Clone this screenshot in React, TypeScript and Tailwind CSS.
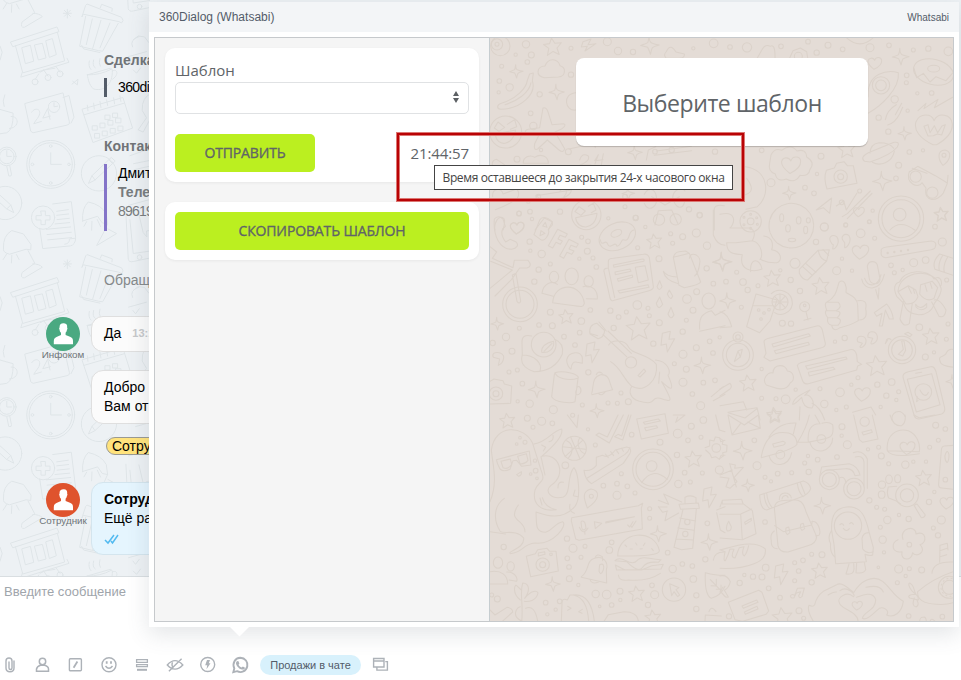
import React from "react";

type Pt = [number, number];
type Dot = [number, number, number];

/* Small repeated ornaments used by the wallpaper */
function Dots({ items }: { items: Dot[] }) {
  return <>{items.map(([x, y, r], i) => <circle key={i} cx={x} cy={y} r={r} />)}</>;
}
function Stars({ items }: { items: Dot[] }) {
  return (
    <>
      {items.map(([x, y, r], i) => (
        <path key={i} transform={`translate(${x} ${y}) scale(${r / 20})`} strokeWidth={64 / r}
          d="M-3-20 5-8 20-9 10 3 15 18 1 11-12 20-9 4-21-5-7-7Z" />
      ))}
    </>
  );
}
function Sparkles({ items }: { items: Dot[] }) {
  return (
    <>
      {items.map(([x, y, r], i) => (
        <path key={i} transform={`translate(${x} ${y}) scale(${r / 20})`} strokeWidth={64 / r}
          d="M-2-20Q-2-5 5-4 10-2 20 0 8 3 5 6 3 10 1 20-3 8-5 5-10 3-20 1-8-3-5-5-3-9-2-20Z" />
      ))}
    </>
  );
}
function Hearts({ items }: { items: Dot[] }) {
  return (
    <>
      {items.map(([x, y, r], i) => (
        <path key={i} transform={`translate(${x} ${y}) scale(${r / 20})`} strokeWidth={64 / r}
          d="M-3 19C-12 12-22 4-21-6-19-16-6-18-1-8 3-20 19-18 20-8 21 4 7 14-3 19Z" />
      ))}
    </>
  );
}
function Bolts({ items }: { items: Pt[] }) {
  return (
    <>
      {items.map(([x, y], i) => (
        <path key={i} transform={`translate(${x} ${y})`} d="M-16-26 8-32 4-8 21-10-1 30-4 6-20 10Z" />
      ))}
    </>
  );
}

function Wallpaper() {
  return (
    <svg className="absolute inset-0 h-full w-full" viewBox="490 38 463 583" fill="none" stroke="#dbd2ca" strokeWidth="3.2" strokeLinejoin="round" strokeLinecap="round" aria-hidden="true">
      <g transform="translate(485 30) scale(.33333)">
        <circle cx="46" cy="48" r="29" /><circle cx="36" cy="43" r="17" /><circle cx="36" cy="43" r="6" />
        <Dots items={[[123, 43, 11], [92, 74, 5], [139, 75, 9], [127, 96, 7], [50, 109, 6], [43, 153, 7], [41, 187, 5], [74, 172, 11], [164, 193, 8], [258, 55, 6], [258, 134, 8], [367, 35, 12], [399, 63, 11], [444, 66, 8], [137, 250, 7], [145, 288, 11], [96, 388, 9], [168, 360, 5], [250, 365, 9], [686, 40, 13], [625, 55, 5], [225, 545, 8], [130, 515, 5], [160, 500, 7], [102, 550, 7], [135, 545, 7], [420, 530, 6], [452, 563, 7], [612, 538, 8], [644, 555, 8], [420, 500, 7], [560, 360, 8], [510, 365, 7], [690, 365, 8]]} />
        <Stars items={[[203, 50, 26]]} />
        <Sparkles items={[[94, 124, 20], [215, 186, 23], [495, 45, 28], [450, 367, 22], [430, 490, 19]]} />
        <path d="M178 143C150 138 155 108 180 108 190 82 218 85 225 107 244 112 243 139 220 141Z" />
        <path d="M134 132 145 129 142 153C155 190 110 237 47 238 34 236 35 224 49 220 96 205 124 174 127 151ZM138 158C132 190 96 213 60 224" />
        <path d="M294 35 318 27 309 44 333 41 300 63 307 49 289 51Z" />
        <path d="M174 234Q184 230 189 246L201 284 236 281Q246 285 231 296L210 306 239 356Q235 371 222 360L187 330 158 357Q145 363 149 341L162 315 122 309Q118 300 130 298L164 293Z" />
        <circle cx="62" cy="306" r="48" /><path d="M31 312C34 353 85 349 92 300ZM28 294 39 276 59 292 42 304ZM67 283 89 269 95 290 76 298" />
        <path d="M272 240C240 245 230 190 274 188" />
        <path d="M115 400C113 382 135 372 149 382 166 370 190 378 190 400ZM22 405Q20 391 35 388L58 404M252 357 320 342Q330 342 331 353M284 390Q291 366 310 378 316 394 285 405H318M330 402 340 374 329 392 354 389M349 405 355 371" />
        <path d="M510 345 650 335M514 363 619 349M508 376 620 362M484 390 490 360 512 350M630 340 682 330" />
        <path d="M23 500C20 475 50 470 54 492L95 477Q106 488 97 505 71 525 31 539M153 497 260 480Q250 514 170 511ZM225 483C240 462 252 485 237 500" />
        <circle cx="304" cy="555" r="44" /><path d="M272 563C275 600 330 605 336 550ZM270 545 282 530 301 543 288 556ZM310 529 325 520 333 540 319 548" />
        <path d="M478 493C490 470 510 475 514 500 520 530 490 550 478 520M600 483C590 467 565 480 563 502 570 535 595 545 600 510M500 500 540 525 583 500M510 585 520 542 560 540 578 580" /><circle cx="522" cy="569" r="17" /><circle cx="572" cy="568" r="17" />
        <path d="M688 600V535Q693 522 718 527M150 600 178 564 202 575 190 600M30 600C26 580 40 552 57 566Q62 574 54 600M550 55Q560 45 573 66L598 72Q600 84 583 85H544Q534 76 543 66Z" />
        <Hearts items={[[97, 593, 20]]} />
      </g>
      <g transform="translate(720 0) scale(.33333)">
        <Dots items={[[30, 141, 7], [81, 142, 14], [183, 139, 7], [264, 125, 7], [290, 158, 8], [324, 136, 9], [368, 148, 7], [450, 143, 12], [507, 136, 7], [580, 150, 6], [625, 146, 8], [685, 154, 13], [559, 248, 6], [560, 226, 7], [524, 298, 11], [592, 280, 5], [635, 279, 7], [476, 353, 8], [505, 395, 8], [563, 332, 5], [568, 456, 7], [609, 451, 5], [303, 469, 9], [291, 522, 5], [153, 548, 12], [255, 563, 7], [282, 580, 7], [365, 607, 7], [419, 573, 6], [458, 632, 5], [536, 496, 9], [528, 535, 7], [448, 665, 6], [313, 681, 12], [125, 451, 7], [377, 674, 6]]} />
        <Sparkles items={[[542, 170, 25], [554, 400, 20], [208, 579, 20], [487, 543, 29]]} />
        <Stars items={[[664, 643, 21], [380, 448, 25]]} />
        <Hearts items={[[465, 189, 20], [214, 494, 28]]} />
        <path d="M639 434C600 416 580 390 588 365 600 338 635 340 642 362 655 335 694 342 697 372 698 398 675 420 650 434Z" />
        <path d="M112 174 125 151Q136 130 151 139 166 130 165 174M209 174 219 152 241 144 260 155 263 174" /><circle cx="235" cy="169" r="12" />
        <path d="M379 113Q420 150 460 113" />
        <ellipse cx="641" cy="216" rx="61" ry="38" transform="rotate(14 641 214)" /><ellipse cx="641" cy="206" rx="18" ry="10" /><path d="M582 205 590 233 610 220 630 246 648 230 678 242 697 220" />
        <path d="M444 290C441 215 505 210 535 218 541 267 480 320 444 340" /><circle cx="483" cy="256" r="26" /><circle cx="483" cy="256" r="16" />
        <path d="M496 359Q501 330 529 314M503 375Q525 370 540 340L548 322M526 344 545 310M594 332 618 310 612 326 654 298 643 323 698 292M612 379 624 374 630 398 643 377 653 398 666 378 676 374 665 405 652 402 640 407 624 408Z" />
        <path d="M434 484Q418 472 445 458L522 427Q542 424 532 441 513 465 450 486ZM450 460Q450 432 477 428 510 428 521 445M457 487C480 500 516 488 523 454" />
        <path d="M153 465Q164 442 185 451 213 430 231 453 258 445 260 471 287 487 270 508 267 530 240 526 225 552 199 537 171 548 166 522 143 514 149 490Z" />
        <path d="M319 511 343 504 350 490 372 485 382 497 400 497 411 550 321 567Q310 535 319 511Z" /><circle cx="362" cy="530" r="20" /><circle cx="362" cy="530" r="9" />
        <path d="M568 516 593 499 646 527 682 549 684 526M568 514C555 550 595 568 606 548L618 564C610 609 654 605 670 579L682 550M577 505 621 520" /><circle cx="587" cy="530" r="17" /><circle cx="637" cy="578" r="17" />
        <path d="M669 496C654 480 650 451 675 450 698 454 691 481 669 496Z" /><circle cx="672" cy="466" r="6" />
        <path d="M289 630 335 594 329 640 310 623ZM349 618 371 603 379 630 411 579M367 650 382 641 451 573M382 656 456 580" />
        <circle cx="543" cy="656" r="68" /><circle cx="543" cy="656" r="57" /><circle cx="539" cy="644" r="19" /><path d="M510 690Q540 657 584 690" />
        <path d="M76 500C150 510 150 590 112 620L78 628M80 535Q110 575 76 584" />
      </g>
      <g transform="translate(485 210) scale(.33333)">
        <path d="M28 27C24 80 45 118 80 118 95 115 104 105 92 95L75 88 62 96Q45 74 53 57L61 49 54 27Q40 13 28 27ZM164 30C174 13 205 29 202 45L190 58C196 73 177 98 166 88L147 74ZM181 37 173 48 186 52ZM168 62 165 77 180 70ZM218 58 247 72 241 82 225 76 219 87 232 93 226 103 213 97 203 114 190 107ZM252 88 280 102 274 112 258 106 252 117 267 123 260 133 246 127 236 145 224 138Z" />
        <ellipse cx="397" cy="79" rx="57" ry="40" transform="rotate(-24 397 79)" /><ellipse cx="394" cy="70" rx="17" ry="10" transform="rotate(-24 394 70)" /><path d="M346 89C350 115 362 83 369 104 378 119 391 90 396 109 411 107 406 82 421 91 437 90 428 62 447 60" />
        <Hearts items={[[97, 53, 20]]} />
        <Dots items={[[102, 11, 7], [141, 27, 5], [134, 95, 8], [136, 122, 5], [170, 132, 11], [196, 162, 6], [161, 179, 8], [148, 215, 8], [290, 82, 6], [309, 94, 7], [307, 124, 9], [283, 146, 5], [324, 144, 6], [334, 171, 7], [370, 25, 5], [452, 24, 8], [481, 51, 5], [458, 113, 6], [557, 71, 6], [593, 80, 9], [634, 69, 12], [563, 100, 6], [522, 146, 9], [666, 107, 11], [644, 16, 8], [665, 175, 8], [685, 221, 7], [635, 245, 9], [606, 267, 13], [624, 301, 9], [604, 331, 6], [457, 285, 13], [489, 295, 6], [493, 317, 6], [523, 338, 9], [376, 302, 8], [401, 321, 7], [424, 306, 6], [386, 354, 8], [316, 300, 7], [196, 307, 9], [289, 333, 10], [202, 347, 9], [162, 345, 7], [103, 355, 6], [63, 381, 11], [81, 424, 9], [23, 399, 8], [237, 380, 7], [284, 368, 7], [270, 405, 7], [310, 487, 8], [72, 486, 6], [97, 480, 6], [112, 521, 7], [134, 581, 11], [205, 599, 12], [98, 574, 5], [292, 585, 6], [369, 579, 6], [397, 580, 6], [430, 575, 9], [408, 549, 6], [505, 401, 8], [593, 365, 8], [594, 433, 12], [604, 478, 9], [568, 461, 6], [594, 517, 12], [655, 518, 7], [690, 511, 7], [622, 552, 7], [647, 587, 12], [634, 413, 9], [674, 394, 7], [684, 429, 7], [704, 382, 5]]} />
        <Stars items={[[508, 94, 22], [243, 320, 21], [460, 355, 35]]} />
        <Sparkles items={[[37, 341, 19], [155, 538, 25], [336, 602, 21], [652, 466, 25], [711, 155, 27]]} />
        <path d="M15 110 35 126 22 145 84 173 88 151 129 151Q144 168 126 174L104 174 80 208 30 258M17 154 82 180 15 235M82 195 93 190 107 273Q104 285 96 274Z" /><circle cx="105" cy="283" r="52" /><circle cx="105" cy="283" r="42" />
        <ellipse cx="207" cy="201" rx="14" ry="17" /><ellipse cx="260" cy="199" rx="20" ry="25" /><ellipse cx="311" cy="214" rx="14" ry="17" /><path d="M203 278C207 215 290 216 298 280 294 296 290 289 203 278ZM171 250C175 220 201 211 217 223M171 250 205 259M294 230C321 222 339 242 337 267L304 266" />
        <path d="M370 154Q370 145 385 145L475 133Q488 130 493 143L505 230Q506 238 492 242L388 271Q378 275 375 264L357 184Q355 175 370 174ZM370 174 389 263M385 165 473 147Q480 148 476 154L387 172ZM390 186 435 177 438 184 391 194ZM397 206 442 195 443 202 400 214ZM399 242 489 224 492 232 404 249ZM451 172 480 167 490 210 460 218Z" />
        <path d="M565 142Q570 126 582 125L602 123 613 130 647 216Q643 225 598 233L582 226 565 142ZM565 142 613 130M613 145C616 121 650 135 644 160Q641 188 629 198M577 201Q544 200 535 184 540 211 580 221M524 212 516 230Q522 247 531 230ZM553 240 547 252Q557 275 563 258ZM524 261 514 280Q520 304 533 283ZM558 292 549 312Q557 333 567 315Z" />
        <circle cx="176" cy="404" r="37" /><path d="M140 378Q109 370 111 400L112 435Q101 470 148 485 210 484 232 432 238 400 209 388M111 435C150 435 173 461 165 483M170 427C168 405 188 398 206 394 209 417 190 430 170 427ZM177 424 201 400M245 450C250 424 291 420 292 445V460L277 457Q260 451 258 478 246 468 245 450Z" />
        <path d="M315 372Q310 344 336 340L359 362Q357 383 339 386ZM354 374 425 440M369 363 439 430M342 336 364 363M318 371 338 377M371 405C380 388 420 389 430 410 440 435 489 430 514 463 520 510 480 550 440 529 410 500 410 476 377 455 365 430 371 405Z" /><circle cx="438" cy="457" r="17" /><path d="M459 497 477 477 482 484 465 501ZM511 450C551 453 559 490 549 496 566 535 567 550 530 515 560 570 569 580 525 565 493 558 520 590 461 573 436 565 430 545 440 530M524 486 521 520" />
        <Bolts items={[[322, 428], [548, 396]]} />
        <path d="M210 488 208 494 200 560C212 580 260 580 270 575L279 505M210 488C235 480 287 493 279 505 250 514 215 505 210 488M275 534C282 521 292 539 286 549 276 560 269 551 274 541M320 550C327 530 319 501 347 494 378 493 371 520 383 539L320 554M334 494Q338 481 352 490M341 551Q350 560 361 545" />
        <path d="M15 514 27 507 54 512 58 522 80 528 77 580 15 582" /><circle cx="33" cy="551" r="20" /><circle cx="33" cy="551" r="9" /><path d="M25 442C15 420 60 425 56 444Q54 460 40 466L44 447Z" />
        <ellipse cx="671" cy="273" rx="20" ry="24" /><path d="M644 358C641 320 654 309 679 302L691 316 720 301M644 364 720 347M679 560 715 530M685 572 720 553M685 0V75Q696 105 720 106" />
      </g>
      <g transform="translate(720 210) scale(.33333)">
        <circle cx="214" cy="47" r="67" strokeDasharray="35 3" /><circle cx="92" cy="34" r="32" /><Dots items={[[92, 34, 10], [92, 13, 3], [110, 23, 3], [112, 43, 3], [92, 55, 3], [72, 44, 3], [72, 22, 3]]} />
        <g><ellipse cx="185" cy="23" rx="6" ry="12" /><ellipse cx="236" cy="31" rx="7" ry="11" /><ellipse cx="204" cy="55" rx="7" ry="11" /><ellipse cx="257" cy="60" rx="6" ry="11" /><ellipse cx="216" cy="90" rx="11" ry="5" /><ellipse cx="265" cy="31" rx="6" ry="8" /></g>
        <path d="M0 13C50 0 46 40 30 54H90Q112 65 97 92L48 98 20 98C20 130 40 132 67 134 55 180 97 189 126 177 121 145 88 140 92 185M97 92C127 99 129 140 120 148M131 78C165 82 157 113 155 119 187 124 187 155 170 158 140 160 128 150 120 148" />
        <Dots items={[[313, 51, 12], [377, 46, 6], [288, 96, 8], [225, 160, 15], [366, 146, 5], [350, 182, 12], [396, 182, 5], [422, 70, 13], [464, 85, 6], [448, 35, 5], [513, 166, 7], [523, 188, 6], [548, 180, 5], [581, 158, 12], [617, 150, 10], [645, 50, 7], [667, 96, 12], [680, 210, 6], [18, 215, 7], [50, 187, 6], [69, 216, 10], [83, 240, 8], [114, 227, 6], [181, 181, 5], [212, 210, 8], [240, 243, 8], [64, 292, 6], [187, 340, 9], [213, 341, 8], [345, 395, 5], [374, 384, 8], [598, 352, 10], [684, 342, 6], [679, 388, 6], [616, 441, 9], [642, 427, 5], [125, 477, 5], [227, 539, 5], [197, 568, 13], [125, 565, 6], [168, 566, 6], [300, 536, 6], [360, 547, 13], [313, 582, 11], [349, 600, 5], [379, 591, 6], [394, 524, 5], [414, 503, 6], [472, 524, 8], [515, 516, 10], [499, 557, 8], [536, 545, 6], [529, 570, 5], [482, 591, 5]]} />
        <Stars items={[[157, 205, 24], [302, 228, 25], [664, 13, 19], [633, 379, 24], [84, 519, 24], [470, 467, 30], [163, 614, 22]]} />
        <Sparkles items={[[7, 155, 29], [23, 272, 24], [698, 514, 20]]} />
        <Hearts items={[[422, 125, 24], [428, 552, 23], [417, 5, 16]]} />
        <path d="M238 178 294 121 328 119 320 153 263 210Q248 211 238 190ZM248 170 277 196M257 160 288 187M295 121Q299 148 320 153M309 119 326 136M336 102C320 80 337 72 350 80 363 98 345 119 338 117L340 104ZM374 98C356 80 375 66 387 77 397 95 380 114 374 113ZM484 124Q480 114 500 111L634 93Q653 95 645 113 642 118 625 121L497 143Q480 141 484 124ZM700 145 659 132Q635 155 645 178L700 196M669 135Q653 159 658 182M683 141Q668 166 673 187" />
        <Dots items={[[503, 129, 2], [523, 126, 2], [543, 123, 2], [564, 120, 2]]} />
        <path d="M442 169C445 150 471 150 473 170L480 207C481 226 452 226 448 207ZM425 207C431 244 481 246 493 193M434 205C445 234 474 231 483 194M467 239 475 267 477 234" />
        <path d="M320 277C350 260 350 238 357 217 375 202 381 234 378 247 387 255 412 260 413 286L415 332Q390 347 360 353 340 368 335 346 320 343 323 323 311 307 320 300 312 280 320 277H355Q369 290 349 302H321M323 323H352Q369 305 350 303M335 346H354Q370 329 352 324M413 272Q444 267 437 296 444 329 419 330" />
        <path d="M534 243C540 180 645 170 661 230 670 240 653 270 643 280 631 328 560 323 552 281L530 259C520 237 522 220 539 216 553 178 625 175 642 207 662 193 669 217 661 230M534 245 565 227 587 240 594 260Q585 284 558 282ZM599 252 602 224 637 214 653 233 642 265Q620 279 599 252M550 274 540 327Q550 354 568 341L577 279M643 270Q659 264 678 300 675 326 657 319L635 276M587 283Q600 303 620 281V292Q602 307 588 291ZM565 230 574 250M579 234 584 250M615 224 621 244M631 219 636 235" />
        <path d="M108 252 171 270 150 333 119 368 80 350ZM98 287H161M154 251C175 231 219 243 217 283 212 311 180 320 164 308" /><circle cx="180" cy="276" r="24" /><path d="M158 276H203M180 252V298M164 260 196 293M195 259 164 293" /><Dots items={[[116, 300, 4], [147, 299, 4], [132, 309, 4], [123, 327, 4], [254, 290, 15], [254, 286, 4]]} />
        <path d="M258 305 264 330M252 331 273 325M463 308 500 282Q516 300 520 327H508L496 300 487 348H478L486 310 470 319Z" />
        <path d="M0 305Q25 310 35 350L0 353" />
        <circle cx="54" cy="435" r="46" /><circle cx="54" cy="435" r="35" /><circle cx="54" cy="381" r="15" /><Dots items={[[54, 381, 7]]} /><path d="M43 455 54 423 67 418 61 441ZM54 423 61 441" />
        <path d="M146 385 290 348Q302 345 307 360L316 400Q317 411 302 414L150 453 132 442 138 430 132 395Q133 388 146 385ZM156 402 266 371 271 378 160 411ZM163 422 265 397 268 404 168 431ZM242 458 390 419Q405 416 410 435L412 455 425 463 413 468 410 480 265 521Q251 524 247 510L232 467Q233 461 242 458ZM257 468 378 441 381 447 262 478ZM265 487 340 472 345 478 268 498Z" />
        <path d="M413 395C405 374 435 374 438 390 440 408 420 417 420 410L427 400ZM444 382C440 360 468 360 472 379 474 400 450 407 453 398L458 385ZM503 390 496 401 500 389Q507 383 513 389M554 371 564 367 576 374 570 380Z" /><circle cx="546" cy="420" r="41" /><circle cx="546" cy="420" r="31" /><path d="M545 393 550 418 535 433 548 438 557 421 552 393ZM139 525C124 508 144 484 159 489 160 460 198 461 202 483 225 485 224 513 211 518 198 547 165 534 157 531ZM661 454C650 435 680 441 679 428 690 410 705 420 705 423M660 454Q663 470 710 472M550 505Q545 490 565 485L632 470Q643 468 648 485L674 594Q676 607 665 612L597 627Q587 627 583 618ZM562 508 635 491 660 584 589 606ZM587 490 605 487" /><circle cx="610" cy="546" r="25" /><path d="M594 572 590 575 592 560M600 540C610 560 620 560 625 547M218 583C219 563 250 550 270 540L254 556C270 550 288 577 276 594Q250 596 245 562 225 583 218 583ZM240 590 238 630M276 580Q300 590 314 630M398 607 453 591 467 615M517 630C510 610 540 590 556 620M0 537 30 520Q38 529 30 537L0 558M0 587 70 575 80 600M24 607 111 593 120 630M25 608 75 624 112 595" />
      </g>
      <g transform="translate(485 415) scale(.33333)">
        <Stars items={[[67, 17, 22], [625, 132, 24], [455, 536, 23], [504, 608, 23]]} />
        <Sparkles items={[[520, 356, 24], [673, 381, 25], [204, 507, 22]]} />
        <Dots items={[[127, 10, 9], [144, 37, 6], [170, 19, 12], [202, 25, 7], [105, 68, 4], [120, 82, 6], [95, 87, 4], [150, 137, 5], [152, 167, 7], [137, 177, 4], [156, 190, 4], [309, 43, 5], [331, 90, 6], [241, 151, 10], [440, 59, 7], [525, 82, 9], [578, 56, 13], [609, 76, 7], [619, 34, 9], [655, 15, 10], [648, 67, 6], [576, 120, 8], [599, 173, 7], [652, 174, 6], [616, 201, 6], [580, 207, 11], [409, 176, 6], [355, 212, 7], [396, 206, 7], [427, 214, 7], [450, 234, 6], [396, 241, 12], [494, 281, 6], [494, 310, 6], [667, 325, 7], [246, 371, 8], [264, 400, 12], [300, 394, 6], [288, 427, 6], [247, 430, 7], [252, 456, 7], [253, 491, 9], [280, 510, 5], [380, 382, 7], [373, 405, 10], [56, 396, 8], [548, 413, 7], [592, 447, 7], [563, 462, 11], [622, 453, 7], [661, 433, 8], [625, 492, 10], [634, 541, 8], [634, 582, 8], [501, 511, 7], [509, 539, 12], [332, 537, 11], [365, 539, 13], [405, 529, 9], [406, 555, 5], [380, 570, 7], [344, 574, 4], [489, 570, 8], [224, 559, 7], [212, 584, 5], [182, 563, 7], [187, 598, 5], [20, 540, 6], [37, 552, 9], [703, 165, 12]]} />
        <path d="M15 260C40 200 23 150 19 105 30 25 117 30 143 85L168 165C185 205 160 196 150 225 140 269 170 291 214 284M147 87C190 79 198 50 230 42 235 58 215 86 170 124C220 110 248 180 198 211 175 229 200 255 235 246 260 235 244 180 267 158 279 171 290 247 270 274 230 320 180 300 153 291 155 330 150 351 182 352 205 345 208 325 233 320 249 330 206 390 150 384 110 388 119 410 76 416 66 408 120 401 116 369 94 340 53 360 45 348 22 310 29 270 58 250M15 350 62 357M100 270C65 320 120 312 120 350M168 125 180 180M214 284Q180 278 172 248M34 134 133 108 138 150 110 154 95 136 84 137 75 163Q55 172 45 162L38 147ZM48 139 76 132 80 148Q70 165 54 158ZM98 124 124 116 129 136Q119 149 105 146ZM95 179 109 170Q111 181 101 184Z" />
        <path d="M170 90 182 97 175 108M204 61Q207 78 192 80M235 202Q218 198 219 219M270 225 265 242 279 245M255 268Q250 288 268 295M171 270 165 249" />
        <circle cx="268" cy="100" r="36" /><path d="M233 95 302 103M257 66 285 132M240 125 293 76M245 77C265 85 266 113 250 129M284 69C273 85 284 112 300 116M247 0 276 38 280 0" /><Dots items={[[263, 1, 6]]} />
        <path d="M333 60 342 54 367 66 399 0M333 60 373 84 415 0M389 65 399 58 410 63 431 0M389 65 413 75 438 0M455 12 540-4 550 55 469 72ZM475 22 520 12 526 18 480 28ZM479 38 514 32 518 38 483 47ZM565 0 600 0 572 22 578 6M692 0 703 45 720 50" />
        <path d="M297 166Q320 170 334 151V127L352 121Q371 132 391 105L425 96Q442 98 435 115L415 145 320 206Q300 195 297 166ZM307 189 420 118Q430 111 435 97M361 117 370 128M377 110 386 122M393 104 401 116M410 100 415 109" />
        <circle cx="504" cy="163" r="61" /><circle cx="504" cy="163" r="51" /><circle cx="500" cy="153" r="16" /><path d="M470 203Q502 154 547 193" />
        <path d="M307 279C300 258 286 230 318 222 347 226 345 254 307 279Z" /><Dots items={[[319, 244, 6]]} />
        <path d="M260 308 460 272 473 265 469 280 472 342 282 376 272 372 259 318ZM328 320 350 325 331 341ZM363 320 448 305 362 324ZM288 321C291 315 300 319 301 328L303 340Q293 350 290 338ZM283 337Q295 362 309 339M299 349 300 358M428 330 434 336 444 320M437 332 441 337 453 318" />
        <path d="M520 256 551 268 536 237 590 261M520 275 546 276M520 275 533 292 548 288M546 290 540 317 581 294M582 268 640 264 643 280 587 283ZM600 264V247Q617 238 633 248V264M594 283 567 397 590 404 623 400 634 282M584 309 632 318M578 339 627 346M572 372 625 375" /><Dots items={[[607, 321, 8], [601, 357, 8]]} />
        <path d="M398 423C400 345 510 340 523 407Q524 425 398 423ZM390 437Q400 425 423 437T456 437 493 430 528 434L520 442Q485 438 473 457T425 440L390 437ZM391 450 420 465 470 465 500 452 535 448 528 462 395 465ZM400 480Q402 500 430 495 490 500 526 475M420 390 425 395M452 384 456 390M480 384 475 392M435 402H442M465 402 472 401M500 401 505 407" />
        <Bolts items={[[673, 248]]} />
        <path d="M289 485C315 468 301 437 329 430 352 420 372 440 364 465L365 504 289 487M330 429Q335 413 352 425L353 437M315 494Q320 510 342 500M344 449Q360 442 355 465 347 485 342 468ZM124 424 151 416 158 404 186 400 194 409 213 409 220 468 137 485ZM160 414 179 410 180 418 160 423Z" /><circle cx="173" cy="449" r="20" /><circle cx="173" cy="449" r="9" /><Dots items={[[198, 418, 4]]} />
        <ellipse cx="39" cy="443" rx="14" ry="17" /><ellipse cx="77" cy="454" rx="11" ry="14" /><path d="M15 470C50 465 68 480 68 507H15M65 471C90 470 99 490 95 499L72 495M110 620C116 565 103 537 113 504 134 505 136 528 119 550 140 525 155 526 159 534 154 558 130 561 118 559M106 555C80 535 89 505 95 512L109 525M112 619C77 605 95 576 106 575M122 580Q149 568 158 618" />
        <path d="M229 619 231 565Q230 548 247 555L255 540 265 540Q307 548 311 619M266 540Q318 535 328 619M248 574 258 580 248 586M292 583 281 590 291 595M357 619 370 599 417 590Q457 590 460 619M15 585 30 600 66 577Q83 579 83 591L52 619" />
        <circle cx="567" cy="524" r="35" /><path d="M554 506 582 518 573 524 584 540 578 545 567 530 560 542ZM661 473Q696 482 720 481M661 473Q658 540 679 550 707 543 720 514M676 494 710 529M678 512 694 513 694 493M694 523H708L708 510M685 436Q687 410 720 411M660 98 674 93V75L687 78 691 66 704 68 707 80 720 76M662 105 675 117 680 128 692 125 703 133 708 121 720 121" /><circle cx="694" cy="99" r="13" /><path d="M695 285 720 275M695 293 706 345 720 353M660 619 661 600 709 603M672 590Q679 570 693 590" />
      </g>
      <g transform="translate(720 415) scale(.33333)">
        <Dots items={[[103, 76, 7], [111, 152, 12], [135, 187, 6], [153, 199, 5], [173, 176, 7], [215, 173, 6], [254, 144, 6], [264, 123, 5], [293, 134, 7], [266, 171, 8], [351, 126, 7], [366, 35, 9], [365, 62, 5], [382, 89, 12], [444, 103, 5], [476, 97, 6], [484, 123, 9], [506, 146, 6], [556, 149, 11], [580, 140, 5], [629, 97, 6], [618, 140, 5], [647, 31, 9], [676, 42, 7], [655, 76, 6], [627, 261, 8], [643, 231, 5], [448, 256, 8], [470, 277, 6], [494, 283, 6], [502, 315, 11], [481, 337, 6], [537, 300, 5], [566, 312, 8], [664, 315, 12], [640, 339, 6], [654, 361, 8], [135, 321, 7], [488, 374, 11], [492, 412, 5], [475, 457, 4], [306, 419, 9], [275, 418, 6], [249, 436, 7], [224, 443, 6], [236, 468, 7], [275, 502, 8], [224, 497, 6], [137, 458, 10], [126, 486, 9], [99, 485, 8], [73, 480, 5], [59, 504, 8], [146, 520, 7], [180, 548, 7], [237, 587, 9], [251, 610, 6], [536, 462, 12], [568, 461, 6], [605, 465, 9], [557, 483, 5], [532, 503, 6], [566, 603, 7], [667, 605, 7], [27, 604, 8]]} />
        <Stars items={[[163, 4, 20], [611, 189, 23], [299, 467, 23], [187, 607, 29]]} />
        <Sparkles items={[[68, 107, 28], [84, 211, 19], [307, 272, 25]]} />
        <Hearts items={[[563, 98, 22], [412, 571, 15], [681, 263, 20]]} />
        <path d="M24 0 36 60 121 40 115 0M25 0 73 30 115 0M37 58 62 25M121 40 83 21M124 124Q136 60 177 53 231 48 231 88 220 105 124 128ZM147 66Q175 22 228 24L220 57M158 87 189 79Q202 83 190 90L162 97ZM147 122C155 160 208 158 215 113M268 0Q260 38 233 82M233 82 265 82Q260 25 300 26L285 0M261 82C335 69 344 70 338 29Q325 19 306 25M270 82C280 125 339 110 338 69" /><circle cx="304" cy="72" r="13" /><circle cx="181" cy="119" r="13" />
        <path d="M401 0 418 74 428 82 474 72 457 0M426 52 454 44 457 52 430 60ZM510 0Q520 35 545 32 559 22 555 0M582 0 597 8 645 0M502 107C497 60 529 39 565 47 590 57 602 86 598 110ZM502 107Q515 130 598 116M700 91 673 93Q665 94 664 105L656 205Q654 219 666 219L700 223M675 121Q682 99 687 119 687 139 681 143 674 137 675 121Z" /><circle cx="434" cy="20" r="14" /><Dots items={[[676, 194, 7]]} />
        <circle cx="328" cy="194" r="30" /><circle cx="328" cy="194" r="21" /><circle cx="402" cy="221" r="31" /><circle cx="402" cy="221" r="21" /><path d="M300 180 305 156 388 146Q414 153 420 180L405 182Q399 159 376 161L318 166M400 113Q428 102 442 132L442 220M406 126Q430 120 432 141V211M358 189Q374 181 378 203" />
        <path d="M0 70 9 76 7 88 21 91 20 110 8 113 10 123 0 130M0 180 37 165M29 146 49 216M29 146 46 150 44 160 70 157 42 188 51 200 30 220 18 215 27 190 0 186" />
        <path d="M119 240 250 198Q268 203 272 220 270 231 253 242L140 285Q121 284 119 240ZM132 235Q134 268 149 281M140 233Q142 261 156 277M232 205Q235 231 249 245M241 202 256 240M178 254C176 226 212 230 214 249M186 252C188 239 203 239 204 248M164 290C158 252 190 257 211 255 240 251 250 261 258 290L290 365Q288 387 263 392L204 411Q178 413 174 392ZM164 332 190 350 275 330 277 318M163 348Q149 357 154 377 152 400 172 401M275 320C295 315 304 350 297 361L287 363M198 339 206 336 210 353 202 359 197 351ZM242 328 250 325 254 341 246 346 241 339Z" />
        <path d="M0 276 7 256 65 253 69 266 97 287 108 356 67 374 0 369M7 267 69 266M0 298 62 297 95 282M62 297 67 374M7 256V267M26 319Q15 338 22 348 34 349 34 335ZM74 322 94 310 94 317 76 328Z" />
        <path d="M0 405Q40 395 55 391 110 379 136 402 140 433 102 446 60 463 0 460M0 404 15 410Q9 439 16 437 25 420 30 402L42 403Q30 428 45 429 53 410 58 398L72 395Q63 418 73 423 81 414 86 392M0 483Q20 477 31 500 27 519 13 526L25 546Q17 550 7 535L0 531M0 530 9 516" />
        <Bolts items={[[183, 479]]} />
        <path d="M335 347C332 296 350 277 386 275 426 276 437 306 448 354L460 398 458 420Q450 424 435 418L439 440 347 446 342 388ZM335 346Q321 365 332 386 329 411 343 425M448 353Q430 352 426 370L428 402Q443 420 460 409M387 447 378 477Q403 480 402 460L401 444M410 444 408 473Q432 477 437 464L433 441" /><circle cx="384" cy="332" r="41" /><path d="M360 329Q367 322 371 331M389 326Q396 319 400 328M370 340Q380 352 388 341" />
        <circle cx="561" cy="241" r="34" /><circle cx="561" cy="241" r="20" /><path d="M530 214 505 216Q499 236 506 249L527 257 542 267M582 271 591 267 616 300Q613 309 604 308Z" /><ellipse cx="507" cy="193" rx="10" ry="13" /><ellipse cx="533" cy="191" rx="9" ry="12" /><ellipse cx="486" cy="209" rx="11" ry="11" /><ellipse cx="485" cy="239" rx="10" ry="11" />
        <path d="M549 373C536 339 589 328 588 357 619 344 623 384 600 389 623 411 587 430 578 413 576 439 540 439 546 410 515 417 511 382 534 374 539 370 549 373ZM558 378 578 398M579 378 557 399M568 374V403" /><circle cx="568" cy="389" r="7" />
        <path d="M211 543Q217 535 224 542L232 520 253 519 246 545Q237 552 236 542L242 530 229 534 222 548Q214 552 211 543ZM25 562 116 526 126 532 146 588 138 598 68 619 45 614ZM66 573 110 555 114 562 70 580ZM73 591 111 574 114 582 76 598Z" />
        <path d="M280 619Q260 585 267 571 280 577 284 569 290 543 310 529L350 509C365 500 385 519 400 532M360 527C380 510 411 541 400 545 381 527 350 547 358 563 359 581 415 590 414 619M324 540Q340 530 350 531M402 532C420 500 458 477 488 499 515 521 517 540 550 559 545 595 521 609 500 600 511 585 488 575 478 580 455 600 440 617 427 610 430 590 469 586 467 553 457 525 421 543 410 547M438 517Q480 507 490 531" />
        <path d="M700 470Q638 491 593 530 590 565 650 568 680 570 700 563M636 475Q638 438 700 441M659 442 660 391 682 385 684 405M659 407 682 400M660 425 680 419M588 538C563 521 563 498 572 506 584 513 581 530 588 538ZM588 538Q596 545 595 555L569 549Q558 539 588 538ZM583 549Q574 573 588 576 600 570 590 554" /><circle cx="688" cy="517" r="33" /><circle cx="688" cy="517" r="21" /><circle cx="690" cy="517" r="27" strokeDasharray="3 10" />
        <path d="M599 619Q600 605 610 607 618 604 619 619M630 619Q634 606 645 619" />
      </g>
    </svg>
  );
}

/* One vertical repeat of the office doodles behind the chat */
function OfficeTile({ y }: { y: number }) {
  return (
    <g transform={`translate(0 ${y})`}>
      <path d="M10-7Q8-45 35-60L70-50 93-18 92-2 78-4 28 11Q6 5 10-7ZM84 0 104 38 66 66Q60 84 73 82L127 50Q118 40 98 40M20 10 9 27M35 14 34 37M49 12 57 27" />
      <path d="M202 28V54M190 40H214M193 31 211 49M211 31 193 49" />
      <path d="M246 50 257 16 261 12 365 52Q374 62 365 69L357 65 251 43ZM301 23 305 13 337 25 336 34M257 49 239 139 295 152 308 154 355 70M245 136 251 147 300 158M277 57 259 134M303 61 278 146M330 69 300 144" />
      <path d="M32 126 171 81 177 95 39 140ZM46 137 68 219 194 183 172 97M67 216 62 232 207 187 201 175M66 143 91 136 101 184 77 191ZM104 135 127 130 138 174 116 180ZM138 122 157 116 169 164 149 172ZM130 209 144 229M116 222 105 239M167 199 180 217M120 217 134 210 165 205" /><circle cx="144" cy="233" r="9" /><circle cx="105" cy="246" r="9" /><circle cx="180" cy="222" r="9" />
      <path d="M262 225 331 205 337 209C340 257 309 276 280 267 267 254 265 240 262 225ZM337 213C351 205 360 223 338 238M268 183Q264 200 273 209M281 180Q276 198 286 204M300 176Q295 190 301 199M262 225Q300 226 334 208M218 244 232 255 234 238 216 253" />
      <path d="M75 311 189 279 208 366Q211 374 201 376L99 399 93 395ZM189 293 207 287 222 352 213 370M95 337C103 323 121 326 119 341 118 352 107 360 101 372L124 365M142 328 128 355 151 349M143 327 150 359" /><circle cx="162" cy="321" r="17" /><path d="M162 309V321L173 319" />
      <path d="M247 328 369 293 398 385 280 428ZM252 345 373 310M262 316 264 333M281 310 283 328M300 305 303 323M320 300 323 317M341 294 344 312M360 288 363 305M316 346H330V359H316ZM339 340H353V353H339ZM278 378H292V391H278ZM301 370H315V384H301ZM325 362H339V376H325ZM348 355H363V369H348ZM285 401H299V415H285ZM308 394H322V408H308ZM332 386H346V400H332ZM355 379H369V393H355Z" />
      <circle cx="152" cy="494" r="72" /><circle cx="152" cy="494" r="65" /><path d="M152 459V494H184" /><circle cx="152" cy="439" r="4" /><circle cx="152" cy="550" r="4" /><circle cx="97" cy="494" r="4" /><circle cx="207" cy="494" r="4" />
      <circle cx="20" cy="470" r="28" /><circle cx="20" cy="470" r="22" /><path d="M20 453V470H34M20 500 26 529Q36 531 34 523L29 498" />
      <circle cx="297" cy="521" r="53" /><path d="M266 550 276 528 334 473 346 484 285 541ZM276 528 285 541M327 480 338 492" /><circle cx="15" cy="610" r="50" /><path d="M0 587 32 616 41 639 20 628 0 610M32 616 20 628" />
      <circle cx="129" cy="654" r="35" /><path d="M123 634H136V648H150V661H136V675H123V661H108V648H123ZM158 613 214 606 227 715Q226 736 211 739L128 747 119 686M170 635 205 630M170 647 206 643M171 660 208 656M165 673 209 669M139 689 212 682M141 705 214 698M143 721 215 714M194 734Q210 732 208 718L225 716" />
      <path d="M248 665Q245 625 265 607 304 615 319 643L323 673 307 670 293 650 248 664M323 673 314 693 290 738 350 702 324 688M260 666 252 680M276 665 275 692M292 660 302 681" />
      <path d="M386 617 467 595M378 642 385 779Q387 789 400 786L480 769M390 660 400 762 480 750M417 644 430 699 441 712 440 694 470 690" /><circle cx="419" cy="773" r="7" />
      <path d="M415 390 440 354 427 332Q425 292 455 280M415 390 430 397 449 361M0 329 39 340Q40 390 20 399L0 402M33 350C59 348 58 385 28 386M12 320Q5 305 14 285M0 180 6 157 0 139M400 120 415 108 434 111 447 128M398 141Q388 119 417 110M386 170 440 155M399 180 407 190 418 175M400 210 410 220 422 204M390 468 455 445M401 492 460 480M403 510 460 497M407 529 460 514" />
    </g>
  );
}

function ChatPattern() {
  return (
    <svg className="absolute inset-0 h-full w-[150px]" viewBox="0 0 150 577" fill="none" stroke="#dfe5e8" strokeWidth="3" strokeLinejoin="round" strokeLinecap="round" aria-hidden="true">
      <g transform="scale(.33333)">
        <OfficeTile y={-753} />
        <OfficeTile y={0} />
        <OfficeTile y={753} />
        <OfficeTile y={1506} />
      </g>
    </svg>
  );
}

function Avatar({ name, tone }: { name: string; tone: string }) {
  return (
    <div className="flex w-[60px] shrink-0 flex-col items-center pt-px">
      <div className={`h-[34px] w-[34px] rounded-full ${tone}`}>
        <svg viewBox="0 0 34 34" className="h-full w-full" fill="#fff">
          <path d="M7.8 27.2V24C8 21.5 9 20.6 11 19.8L15 18V15.8C13.8 14.8 13.8 13.5 13.4 12.2 13 11.5 13.2 10.8 13.6 10.4 13.3 7.6 15 6 18 6.2 20.6 6.5 21.5 8 21.1 10.4 21.6 11 21.5 12 21 12.8 20.8 14 20.4 15 19.6 15.8V18L24 19.8C26 20.6 27 21.6 27 24V27.2Z" />
        </svg>
      </div>
      <span className="text-[9.8px] leading-[8px] whitespace-nowrap text-[#6f7579]">{name}</span>
    </div>
  );
}

function Chat() {
  return (
    <main className="relative h-[577px] overflow-hidden border-b border-[#d9dee1] bg-[#edf1f4]">
      <ChatPattern />
      <div className="relative w-[149px] overflow-hidden pt-[51px] text-[14px] leading-[19px] whitespace-nowrap">
        <section className="ml-[104px]">
          <h2 className="font-bold text-[#707477]">Сделка</h2>
          <div className="mt-2 flex h-[19px] border-l-[3px] border-[#535c69] pl-[11px] text-black">
            <span className="tracking-[-0.6px]">360di</span>
          </div>
        </section>
        <section className="mt-[40px] ml-[104px]">
          <h2 className="font-bold text-[#707477]">Контак</h2>
          <div className="mt-2 h-[67px] border-l-[3px] border-[#8474c8] pl-[11px]">
            <div className="text-black">Дмит</div>
            <div className="font-bold text-[#787c7e]">Телеф</div>
            <div className="tracking-[-0.8px] text-[#787c7e]">89619</div>
          </div>
        </section>
        <div className="mt-[40px] ml-[104px] text-[#85898b]">Обращ</div>
        <div className="mt-[26px] flex pl-[33px]">
          <Avatar name="Инфоком" tone="bg-[#4aa981]" />
          <div className="-ml-[2px] flex h-[36px] w-[120px] shrink-0 items-center rounded-[12px] border border-[#dfdfdf] bg-[#fbfbfb] pb-[2px] pl-3">
            Да<span className="ml-[11px] pt-px text-[11px] font-bold text-[#c6c8ca]">13:1</span>
          </div>
        </div>
        <div className="mt-[11px] ml-[91px] h-[54px] w-[120px] rounded-[12px] border border-[#dfdfdf] bg-[#fbfbfb] pt-[7px] pl-3">
          <div>Добро</div>
          <div>Вам от</div>
        </div>
        <div className="mt-[13px] ml-[106px] h-[18px] w-[90px] rounded-[9px] border border-[#9a9a93] bg-[#ffe37d] pl-[5px] leading-[17px]">Сотру</div>
        <div className="mt-[27px] flex pl-[33px]">
          <Avatar name="Сотрудник" tone="bg-[#df532d]" />
          <div className="-ml-[2px] h-[73px] w-[120px] shrink-0 rounded-[12px] border border-[#d4e5ee] bg-[#e5f5fe] pt-[7px] pl-3">
            <div className="font-bold">Сотруд</div>
            <div>Ещё ра</div>
            <svg className="mt-[6px] h-[11px] w-[15px]" viewBox="0 0 15 11" fill="none" stroke="#52baf0" strokeWidth="1.5">
              <path d="M1 6 4 9 10 1M7 7 8.5 9 14 1" />
            </svg>
          </div>
        </div>
      </div>
    </main>
  );
}

function Toolbar() {
  const icon = "h-[20px] w-[20px] shrink-0";
  return (
    <div className="flex h-[20px] items-center text-[#adb2b8]">
      <svg className={icon} viewBox="0 0 20 20" fill="none" stroke="currentColor" strokeWidth="1.4" strokeLinecap="round">
        <path d="M14 6V13C14 18 6 18 6 13V6C6 2 12 2 12 6V13C12 15 9 15 9 13V7" />
      </svg>
      <svg className={`${icon} ml-[12px]`} viewBox="0 0 20 20" fill="none" stroke="currentColor" strokeWidth="1.5">
        <circle cx="10.5" cy="6.5" r="3.2" /><path d="M4.5 16.3V14C5 11.5 7 10.8 8.5 10.3H12.5C14.5 10.8 16.5 12 16.5 14V16.3Z" />
      </svg>
      <svg className={`${icon} ml-[13px]`} viewBox="0 0 20 20" fill="none" stroke="currentColor" strokeWidth="1.4">
        <rect x="4.4" y="3.7" width="12" height="12" rx="1" /><path d="M12.4 6.5 8.6 12.8" strokeWidth="1.8" />
      </svg>
      <svg className={`${icon} ml-[14px]`} viewBox="0 0 20 20" fill="none" stroke="currentColor" strokeWidth="1.4">
        <circle cx="10" cy="9.7" r="7" /><path d="M6.5 11Q10 15.5 13.5 11" /><path d="M7.7 6.2V8.8M12 6.2V8.8" strokeWidth="1.8" />
      </svg>
      <svg className={`${icon} ml-[13px]`} viewBox="0 0 20 20" fill="none" stroke="currentColor" strokeWidth="1.3">
        <path d="M4.6 4.6H15.4V7.4H4.6ZM4.6 9.6H15.4V11.6H4.6Z" /><path d="M5 14.8H15" strokeWidth="2" />
      </svg>
      <svg className={`${icon} ml-[13px]`} viewBox="0 0 20 20" fill="none" stroke="currentColor" strokeWidth="1.4">
        <path d="M2.3 10Q10 1.2 17.8 10 10 18.2 2.3 10ZM16.6 3.7 3.9 16.2M7.5 7.2Q6.1 10.7 8.5 12.7" />
      </svg>
      <svg className={`${icon} ml-[13px]`} viewBox="0 0 20 20" fill="none" stroke="currentColor" strokeWidth="1.4">
        <circle cx="9.7" cy="9.5" r="7" /><path d="M9 5H12L10.8 8.3H12.5L8.5 14.3 9.2 10.2H7.2Z" fill="currentColor" stroke="none" />
      </svg>
      <svg className={`${icon} ml-[12px]`} viewBox="0 0 20 20" fill="none" stroke="currentColor" strokeWidth="1.9">
        <path d="M3.3 17.2 4.3 13.4C2 8.5 5 3 10.3 2.8 15.3 3 18.1 7 17.3 11.3 16.1 16.5 11.1 18.3 7 16.2Z" />
        <path d="M6.8 6.2 8.3 6 9.4 8.6 8.5 9.8C9.3 11.2 10.3 12 11.6 12.5L12.9 11.5 15 12.7C15 14.3 12.8 15 11.1 14.3 8.3 13.4 5.7 9.5 6 7.7Z" fill="currentColor" stroke="none" />
      </svg>
      <div className="ml-[10px] flex h-[20px] w-[101px] items-center justify-center rounded-full bg-[#d8f1fc] text-[11px] whitespace-nowrap text-[#535c69]">Продажи в чате</div>
      <svg className={`${icon} ml-[10px]`} viewBox="0 0 20 20" fill="none" stroke="currentColor" strokeWidth="1.4">
        <path d="M2.6 3.5H13V12H2.6ZM2.6 6H13M14.3 6.6H16.4V15.1H5.9V12.5" />
      </svg>
    </div>
  );
}

function Popup() {
  return (
    <div className="absolute top-[2px] left-[149px] h-[625px] w-[810px] bg-white shadow-[0_7px_21px_rgba(83,92,105,0.16)]">
      <header className="flex h-[30px] items-center justify-between bg-[#f3f5f7] pr-[10px] pl-[10px] text-[#535c69]">
        <span className="text-[12px]">360Dialog (Whatsabi)</span>
        <span className="text-[10px]">Whatsabi</span>
      </header>
      <div className="mt-[5px] ml-[5px] flex h-[585px] w-[800px] border border-[#c6c9cc] bg-[#f5f5f5] font-['Open_Sans','Noto_Sans',sans-serif] text-[#606468]">
        <aside className="w-[335px] shrink-0 border-r border-[#c6cdd0] px-[10px] pt-[10px]">
          <section className="h-[134px] rounded-[10px] bg-white px-[10px] pt-[11px] shadow-[0_1px_3px_rgba(0,0,0,0.06)]">
            <label className="block h-[23px] text-[15px] leading-[22px]">Шаблон</label>
            <div className="flex h-[32px] w-[294px] items-center justify-end rounded-[5px] border border-[#e0e2e4] pr-[9px] pb-[2px]">
              <svg className="h-[12px] w-[6px]" viewBox="0 0 6 12" fill="#5c6064"><path d="M0 5 3 0 6 5ZM0 7H6L3 12Z" /></svg>
            </div>
            <div className="mt-[20px] flex items-center justify-between">
              <button className="h-[38px] w-[140px] rounded-[5px] bg-[#bbef20] pb-[2px] text-[14px] tracking-[-0.15px] whitespace-nowrap [-webkit-text-stroke:0.35px_#606468]">ОТПРАВИТЬ</button>
              <span className="text-[15px] tracking-[-0.12px]">21:44:57</span>
            </div>
          </section>
          <section className="mt-[20px] h-[58px] rounded-[10px] bg-white p-[10px] shadow-[0_1px_3px_rgba(0,0,0,0.06)]">
            <button className="h-[38px] w-full rounded-[5px] bg-[#bbef20] pb-[2px] text-[14px] tracking-[-0.13px] whitespace-nowrap [-webkit-text-stroke:0.35px_#606468]">СКОПИРОВАТЬ ШАБЛОН</button>
          </section>
        </aside>
        <div className="relative flex-1 overflow-hidden bg-[#e4dcd6]">
          <Wallpaper />
          <div className="relative mt-[20px] ml-[86px] flex h-[88px] w-[292px] items-center justify-center rounded-[8px] bg-white pt-[3px] text-[23px] tracking-[-0.42px] whitespace-nowrap shadow-[0_1px_1px_rgba(0,0,0,0.2)]">Выберите шаблон</div>
        </div>
      </div>
      <svg className="absolute top-[625px] left-[81px] h-[10px] w-[19px]" viewBox="0 0 19 10" fill="#fff"><path d="M0 0H19L9.5 9.5Z" /></svg>
    </div>
  );
}

export default function App() {
  return (
    <div className="relative h-[680px] w-[961px] overflow-hidden bg-white font-['Liberation_Sans',Arial,sans-serif]">
      <Chat />
      <footer className="flex h-[103px] flex-col justify-between pt-[6px] pb-[5px]">
        <div className="pl-1 text-[13px] leading-[18px] text-[#a0a5ab]">Введите сообщение</div>
        <Toolbar />
      </footer>
      <Popup />
      <div className="absolute top-[132px] left-[396px] h-[70px] w-[349px] border border-[#dc7773]">
        <div className="h-full w-full border-2 border-[#b90305]">
          <div className="h-full w-full border border-[#dc7773]" />
        </div>
      </div>
      <div className="absolute top-[165px] left-[434px] flex h-[25px] w-[299px] items-center justify-center border border-[#444] bg-white font-['Open_Sans','Noto_Sans',sans-serif] text-[12px] tracking-[-0.36px] whitespace-nowrap text-[#444]">Время оставшееся до закрытия 24-х часового окна</div>
    </div>
  );
}
